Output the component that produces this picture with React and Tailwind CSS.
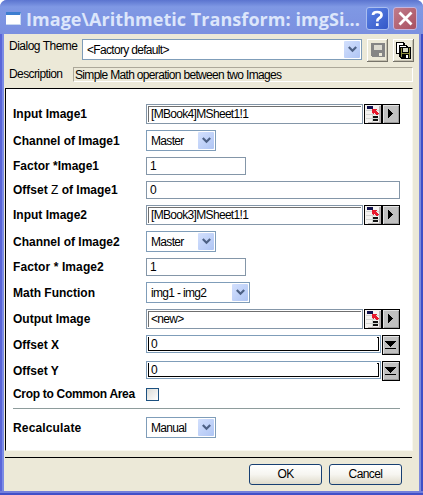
import React from "react";

const VALUE = "font-['Liberation_Sans',Arial,sans-serif] tracking-[-0.68px]";

function Chevron() {
  return (
    <span className="flex h-[17px] w-[16px] shrink-0 items-center justify-center rounded-[1px] bg-linear-to-br from-[#d3e0fd] to-[#afc5f4]">
      <svg width="9" height="7" viewBox="0 0 9 7" fill="none" stroke="#4d6185" strokeWidth="2.2">
        <path d="M0.8 1 L4.5 4.7 L8.2 1" />
      </svg>
    </span>
  );
}

function Select({ value, width }) {
  return (
    <div className={`flex h-[21px] items-center justify-between border border-[#7f9db9] bg-white pr-px pl-[4px] ${width} ${VALUE}`}>
      <span>{value}</span>
      <Chevron />
    </div>
  );
}

function Field({ value, width }) {
  return <div className={`flex h-[18px] items-center border border-[#8496a8] bg-white pl-[3px] ${width} ${VALUE}`}>{value}</div>;
}

function RangeField({ value }) {
  return (
    <div className="flex h-[20px] w-[254px]">
      <div className="w-[217px] border border-[#8496a8] bg-white p-px">
        <div className={`flex h-[16px] w-[213px] items-center border-t border-l border-[#6f6f6f] pb-px pl-[2px] ${VALUE}`}>
          <span>{value}</span>
        </div>
      </div>
      <svg className="ml-px" width="36" height="20" viewBox="0 0 36 20" shapeRendering="crispEdges">
        <rect width="36" height="20" fill="#000" />
        <rect x="1" y="1" width="16" height="18" fill="#f4f2f0" />
        <path d="M15 2h2v17H4v-1h11z" fill="#b9b4b4" />
        <path d="M2 6h13v1H2zM2 10h13v1H2zM2 14h13v1H2zM8 2h1v16H8z" fill="#d2d6d2" />
        <rect x="3" y="2" width="6" height="3" fill="#10104c" />
        <path d="M8 5h5v1h-1v1h1v1h1v1h1v1h-1v1h-2v-1h-1V9h-1v1H9V9H8z" fill="#e8182c" />
        <path d="M9 12h5v2H9zM9 15h5v2H9z" fill="#111" />
        <rect x="19" y="1" width="16" height="18" fill="#c0c0c0" />
        <path d="M19 19V1h16v1H20v17z" fill="#e3e3e3" />
        <path d="M35 2v17H20v-1h14V2z" fill="#999" />
        <path d="M24 5h1v1h1v1h1v1h1v1h1v1h-1v1h-1v1h-1v1h-1v1h-1z" fill="#000" />
      </svg>
    </div>
  );
}

function OffsetField() {
  return (
    <div className="flex h-[20px] w-[254px] items-start">
      <div className="h-[18px] w-[235px] border border-[#7f9db9] bg-white pt-px pr-px pl-px">
        <div className={`relative flex h-[14px] items-center border-b border-l border-black pl-[2px] ${VALUE}`}>
          0
          <span className="absolute top-0 right-0 h-[14px] w-[2px] border-t border-r border-black" />
        </div>
      </div>
      <svg className="ml-px" width="18" height="20" viewBox="0 0 18 20" shapeRendering="crispEdges">
        <rect width="18" height="20" fill="#000" />
        <rect x="1" y="1" width="16" height="18" fill="#c0c0c0" />
        <path d="M1 19V1h16v1H2v17z" fill="#e3e3e3" />
        <path d="M17 2v17H2v-1h14V2z" fill="#999" />
        <path d="M3 6h11v1H3zM4 7h9v1H4zM5 8h7v1H5zM6 9h5v1H6zM7 10h3v1H7zM8 11h1v1H8zM3 13h11v1H3z" fill="#000" />
      </svg>
    </div>
  );
}

function Row({ label, gap, track = "", children }) {
  return (
    <div className={`flex items-center ${gap}`}>
      <div className={`w-[133px] shrink-0 font-bold ${track}`}>{label}</div>
      {children}
    </div>
  );
}

function TitleBar() {
  return (
    <div className="flex h-[34px] shrink-0 items-center bg-linear-to-b from-[#5b74cf] via-[#7f98e4] via-20% to-[#7b90e0] pt-[3px] pl-[6px]">
      <div className="h-[13px] w-[15px] border-t-[3px] border-r border-b border-[#3d7ed0] border-r-[#c8d8f0] border-b-[#c8d8f0] bg-white" />
      <div className="mt-px ml-[5px] w-[337px] font-['Open_Sans','Noto_Sans',sans-serif] text-[18px] leading-[22px] font-bold tracking-[0.05px] text-[#dce6fb]">
        Image\Arithmetic Transform: imgSi...
      </div>
      <div className="ml-[3px] flex h-[23px] w-[23px] items-center justify-center rounded-[3px] border border-[#a9bdf0] bg-linear-to-br from-[#5c82e4] to-[#3457c8]">
        <svg width="13" height="17" viewBox="0 0 13 17" fill="none" stroke="#fff" strokeWidth="2.7">
          <path d="M2 5 Q2 2 6.200 2 Q10.500 2 10.500 5 Q10.500 7 8 8.300 Q6.300 9.200 6.300 11.500" />
          <path d="M6.300 13.200v2.800" />
        </svg>
      </div>
      <div className="ml-[4px] flex h-[23px] w-[24px] items-center justify-center rounded-[3px] border border-[#c4b4dc] bg-linear-to-br from-[#c07c8c] to-[#a95061]">
        <svg width="15" height="15" viewBox="0 0 15 15" stroke="#fff" strokeWidth="2.800">
          <path d="M1.500 1.500l12 12M13.500 1.500l-12 12" />
        </svg>
      </div>
    </div>
  );
}

function Bevel({ children }) {
  return (
    <svg className="ml-[5px]" width="21" height="23" viewBox="0 0 21 23" shapeRendering="crispEdges">
      <path d="M0 0h21v23H0z" fill="#ece9d8" />
      <path d="M0 23V0h21v1H1v22z" fill="#fff" />
      <path d="M21 0v23H0v-1h20V0z" fill="#77746a" />
      <path d="M20 1v21H1v-1h18V1z" fill="#c4c0b0" />
      {children}
    </svg>
  );
}

function SaveButtons() {
  return (
    <>
      <Bevel>
        <path d="M4 4h14v14H5l-1-1z" fill="#858585" />
        <path d="M7 6h8v5H7z" fill="#dcdad0" />
        <path d="M12 14h3v3h-3z" fill="#ece9d8" />
      </Bevel>
      <Bevel>
        <path d="M3 3h8v1h1v11H3z" fill="#000" />
        <path d="M4 4h6v10H4z" fill="#fff" />
        <path d="M6 6h8v1h1v11H6z" fill="#000" />
        <path d="M7 7h6v10H7z" fill="#fff" />
        <path d="M7 8h11v12H8v-1H7z" fill="#000" />
        <path d="M8 9h1v9H8zM16 9h1v10h-1zM9 14h7v1H9z" fill="#8c8c3c" />
        <path d="M10 9h5v4h-5z" fill="#d6d8c4" />
        <path d="M13 16h2v3h-2z" fill="#fff" />
      </Bevel>
    </>
  );
}

function PushButton({ children }) {
  return (
    <button className="h-[21px] w-[73px] rounded-[3px] border border-[#173f72] bg-linear-to-b from-white via-[#f6f5f0] to-[#dfdbcb] text-center leading-[19px] tracking-[-0.6px]">
      {children}
    </button>
  );
}

export default function App() {
  return (
    <div className="h-[495px] w-[423px] bg-white">
      <div className="flex h-[495px] w-[423px] flex-col overflow-hidden rounded-t-[7px] bg-[#6775dc] font-['Liberation_Sans',Arial,sans-serif] text-[12px] leading-[14px] whitespace-nowrap text-black">
        <TitleBar />
        <div className="flex h-[457px] border-r-2 border-l-2 border-r-[#3f4fc6] border-l-[#5a66d8]">
          <div className="w-[2px] bg-[#7b8be6]" />
          <div className="flex w-[415px] flex-col bg-[#ece9d8]">
            <div className="flex h-[30px] items-end pl-[5px]">
              <div className="mb-[11px] w-[73px] shrink-0 tracking-[-0.5px]">Dialog Theme</div>
              <div className={`mb-[4px] flex h-[21px] w-[280px] items-center justify-between border border-[#7f9db9] bg-white pr-px pl-[4px] ${VALUE}`}>
                <span>&lt;Factory default&gt;</span>
                <Chevron />
              </div>
              <div className="mb-[2px] flex"><SaveButtons /></div>
            </div>
            <div className="mt-[3px] flex h-[14px] items-center pl-[5px]">
              <div className="w-[64px] pb-px tracking-[-0.6px]">Description</div>
              <div className={`h-[15px] w-[340px] border border-t-[#aca899] border-r-white border-b-white border-l-[#aca899] pl-px ${VALUE}`}>
                Simple Math operation between two Images
              </div>
            </div>
            <div className="mt-[7px] ml-px h-[363px] w-[408px] border border-black border-r-[#f8f7ee] border-b-[#f8f7ee] bg-white pt-[15px] pl-[7px]">
              <Row label="Input Image1" gap="mb-[6px]"><RangeField value="[MBook4]MSheet1!1" /></Row>
              <Row label="Channel of Image1" gap="mb-[6px]"><Select value="Master" width="w-[70px]" /></Row>
              <Row label="Factor *Image1" gap="mb-[6px]"><Field value="1" width="w-[100px]" /></Row>
              <Row label={<>Offset <span className="font-normal">Z</span> of Image1</>} gap="mb-[6px]"><Field value="0" width="w-[254px]" /></Row>
              <Row label="Input Image2" gap="mb-[6px]"><RangeField value="[MBook3]MSheet1!1" /></Row>
              <Row label="Channel of Image2" gap="mb-[6px]"><Select value="Master" width="w-[70px]" /></Row>
              <Row label="Factor * Image2" gap="mb-[6px]" track="tracking-[0.1px]"><Field value="1" width="w-[100px]" /></Row>
              <Row label="Math Function" gap="mb-[6px]"><Select value="img1 - img2" width="w-[104px]" /></Row>
              <Row label="Output Image" gap="mb-[6px]"><RangeField value="<new>" /></Row>
              <Row label="Offset X" gap="mb-[6px]"><OffsetField /></Row>
              <Row label="Offset Y" gap="mb-[6px]"><OffsetField /></Row>
              <Row label="Crop to Common Area" gap="mb-[7px]" track="tracking-[-0.3px]">
                <div className="h-[13px] w-[13px] border border-[#1c5180] bg-linear-to-br from-[#dcdcd7] to-white" />
              </Row>
              <div className="mb-[8px] h-px w-[387px] bg-[#8e9c9c]" />
              <Row label="Recalculate" gap="" track="tracking-[0.15px]"><Select value="Manual" width="w-[70px]" /></Row>
            </div>
            <div className="mt-[6px] ml-px h-px w-[407px] bg-black" />
            <div className="mt-[6px] flex gap-[7px] pl-[245px]">
              <PushButton>OK</PushButton>
              <PushButton>Cancel</PushButton>
            </div>
          </div>
          <div className="w-[2px] bg-[#7d8ade]" />
        </div>
        <div className="h-[2px] bg-[#7480dc]" />
        <div className="h-[2px] bg-[#4150c8]" />
      </div>
    </div>
  );
}
